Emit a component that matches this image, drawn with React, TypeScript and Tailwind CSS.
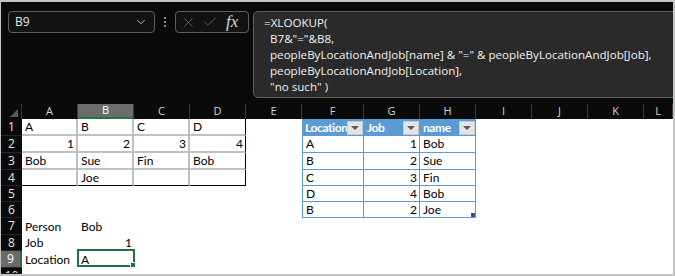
import { ChevronDown, X, Check } from "lucide-react"

const cols = [
  { id: "A", w: "w-[56px]" },
  { id: "B", w: "w-[56px]" },
  { id: "C", w: "w-[56px]" },
  { id: "D", w: "w-[56px]" },
  { id: "E", w: "w-[56px]" },
  { id: "F", w: "w-[62px]" },
  { id: "G", w: "w-[56px]" },
  { id: "H", w: "w-[56px]" },
  { id: "I", w: "w-[56px]" },
  { id: "J", w: "w-[56px]" },
  { id: "K", w: "w-[56px]" },
  { id: "L", w: "flex-1" },
]

const rowHeights = ["h-[17px]", "h-[17px]", "h-[17px]", "h-[16px]", "h-[16px]", "h-[16px]", "h-[17px]", "h-[16px]", "h-[17px]", "h-[6px]"]

const data: Record<string, string> = {
  A1: "A", B1: "B", C1: "C", D1: "D",
  A2: "1", B2: "2", C2: "3", D2: "4",
  A3: "Bob", B3: "Sue", C3: "Fin", D3: "Bob",
  B4: "Joe",
  A7: "Person", B7: "Bob",
  A8: "Job", B8: "1",
  A9: "Location", B9: "A",
  F1: "Location", G1: "Job", H1: "name",
  F2: "A", G2: "1", H2: "Bob",
  F3: "B", G3: "2", H3: "Sue",
  F4: "C", G4: "3", H4: "Fin",
  F5: "D", G5: "4", H5: "Bob",
  F6: "B", G6: "2", H6: "Joe",
}

const formula = [
  "=XLOOKUP(",
  "  B7&\"=\"&B8,",
  "  peopleByLocationAndJob[name] & \"=\" & peopleByLocationAndJob[Job],",
  "  peopleByLocationAndJob[Location],",
  "  \"no such\" )",
]

function cellBorder(col: string, row: number) {
  const inBox = ["A", "B", "C", "D"].includes(col) && row >= 1 && row <= 4
  if (inBox) {
    const right = col === "D" ? "border-r border-r-black" : "border-r-2 border-r-[#c0c0c0]"
    const bottom = row === 4 ? "border-b border-b-black" : "border-b-2 border-b-[#c0c0c0]"
    return `${right} ${bottom}`
  }
  const inTable = ["F", "G", "H"].includes(col) && row >= 2 && row <= 6
  if (inTable) {
    return `border-r border-b border-[#5b9bd5] ${col === "F" ? "border-l" : ""}`
  }
  return ""
}

function FilterButton() {
  return (
    <div className="absolute right-[1px] top-[2px] w-[16px] h-[14px] bg-[#e4e4e4] border border-[#c9c9c9] flex items-center justify-center">
      <svg width="8" height="5" viewBox="0 0 8 5">
        <polygon points="0,0 8,0 4,4" fill="#595959" />
      </svg>
    </div>
  )
}

function Cell({ col, row, w }: { col: string; row: number; w: string }) {
  const key = `${col}${row}`
  const v = data[key]
  const isNum = v !== undefined && /^\d+$/.test(v)
  const isHeader = ["F", "G", "H"].includes(col) && row === 1

  if (isHeader) {
    return (
      <div className={`${w} shrink-0 h-full relative bg-[#5b9bd5] text-white font-bold tracking-[-0.4px] flex items-center pl-[3px] overflow-hidden`}>
        <span className="whitespace-nowrap">{v}</span>
        <FilterButton />
      </div>
    )
  }

  return (
    <div
      className={`${w} shrink-0 h-full relative flex items-center whitespace-nowrap ${
        isNum ? "justify-end pr-[2px]" : "pl-[3px]"
      } ${cellBorder(col, row)}`}
    >
      {v}
      {key === "B9" && (
        <div className="absolute -left-[1px] -top-[2px] w-[58px] h-[18px] border-2 border-[#217346]">
          <div className="absolute -right-[3px] -bottom-[3px] w-[6px] h-[6px] bg-[#217346] border border-white" />
        </div>
      )}
      {key === "H6" && <div className="absolute right-0 bottom-0 w-[4px] h-[4px] bg-[#2e4aa8]" />}
    </div>
  )
}

export default function App() {
  return (
    <div className="w-[675px] h-[276px] overflow-hidden bg-white border-l border-r-2 border-t-2 border-b-2 border-[#c4c4c4] flex flex-col">
      {/* Formula bar */}
      <div className="h-[102px] shrink-0 bg-[#0a0a0a] flex items-start pl-[7px] pt-[9px] overflow-hidden">
        <div className="w-[147px] h-[22px] shrink-0 rounded-[4px] border border-[#5f5f5f] bg-[#121212] flex items-center justify-between pl-[6px] pr-[6px]">
          <span className="text-[12px] text-[#e2e8ee] font-['Open_Sans',sans-serif]">B9</span>
          <ChevronDown className="w-[14px] h-[14px] text-[#c8c8c8]" strokeWidth={1.5} />
        </div>
        <div className="w-[20px] h-[22px] shrink-0 flex flex-col items-center justify-center gap-[2px]">
          <div className="w-[2px] h-[2px] bg-[#8a8a8a]" />
          <div className="w-[2px] h-[2px] bg-[#8a8a8a]" />
          <div className="w-[2px] h-[2px] bg-[#8a8a8a]" />
        </div>
        <div className="w-[74px] h-[22px] shrink-0 rounded-[4px] border border-[#5f5f5f] bg-[#121212] flex items-center pl-[5px] gap-[6px]">
          <X className="w-[15px] h-[15px] text-[#6b6b6b]" strokeWidth={1.3} />
          <Check className="w-[16px] h-[16px] text-[#6b6b6b]" strokeWidth={1.3} />
          <span className="text-[17px] leading-none italic text-[#d8d8d8] font-['Liberation_Serif',serif] ml-[2px] -mt-[2px]">fx</span>
        </div>
        <div className="ml-[4px] -mr-[12px] flex-1 h-[87px] rounded-[5px] border border-[#5f5f5f] bg-[#2a2a2a] pl-[10px] pt-[3px] font-['Open_Sans',sans-serif] text-[11.6px] leading-[16px] text-[#f2f2f2]">
          {formula.map((l, i) => (
            <div key={i} className="whitespace-pre">{l}</div>
          ))}
        </div>
      </div>

      {/* Column headers */}
      <div className="h-[15px] shrink-0 bg-[#0a0a0a] flex font-['Open_Sans',sans-serif] text-[11px] text-[#d4d4d4]">
        <div className="w-[21px] shrink-0 h-full relative border-r border-[#3a3a3a]">
          <svg className="absolute right-[3px] bottom-[2px]" width="8" height="8" viewBox="0 0 8 8">
            <polygon points="8,0 8,8 0,8" fill="#5a5a5a" />
          </svg>
        </div>
        {cols.map((c) => (
          <div
            key={c.id}
            className={`${c.w} shrink-0 h-full flex items-center justify-center border-r border-[#3a3a3a] ${
              c.id === "B" ? "bg-[#6b6b6b] text-white border-b-2 border-b-[#217346]" : ""
            }`}
          >
            {c.id}
          </div>
        ))}
      </div>

      {/* Rows */}
      <div className="flex-1 flex flex-col font-['Lato',sans-serif] text-[12px] text-black">
        {rowHeights.map((h, i) => {
          const row = i + 1
          return (
            <div key={row} className={`${h} shrink-0 flex`}>
              <div
                className={`w-[21px] shrink-0 h-full flex justify-center overflow-hidden font-['Open_Sans',sans-serif] text-[12px] border-b border-[#262626] ${
                  row === 10 ? "items-start leading-[16px]" : "items-center"
                } ${
                  row === 9 ? "bg-[#6b6b6b] text-white border-r-2 border-r-[#217346]" : "bg-[#0a0a0a] text-[#e6e6e6]"
                }`}
              >
                {row}
              </div>
              {cols.map((c) => (
                <Cell key={c.id} col={c.id} row={row} w={c.w} />
              ))}
            </div>
          )
        })}
      </div>
    </div>
  )
}
